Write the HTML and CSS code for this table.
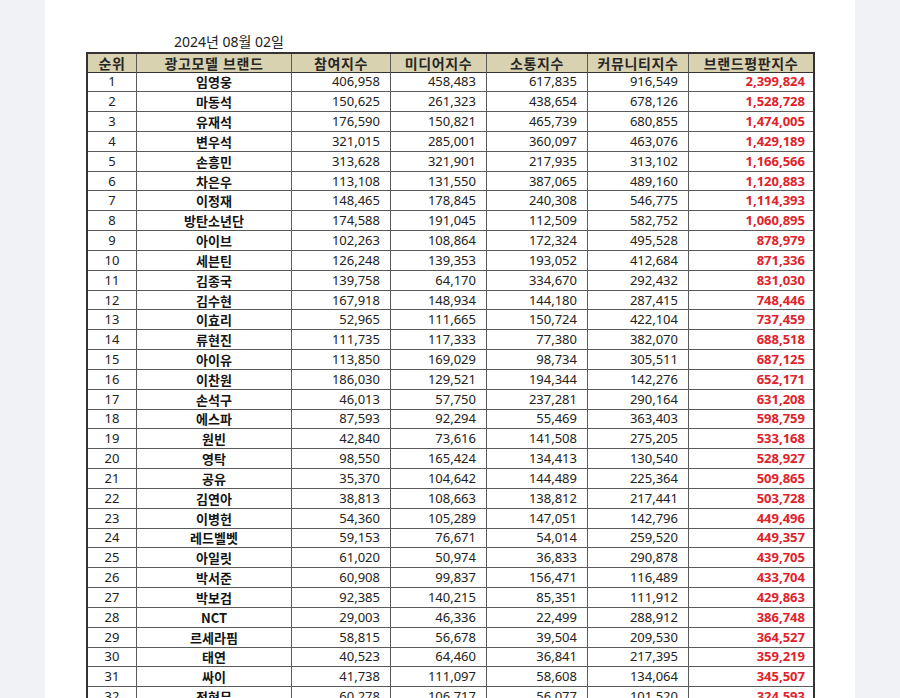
FILE: index.html
```html
<!DOCTYPE html>
<html lang="ko">
<head>
<meta charset="utf-8">
<title>광고모델 브랜드평판</title>
<link rel="stylesheet" href="styles.css">
</head>
<body>
<div class="page">
  <div class="date">2024년 08월 02일</div>
  <table class="rank">
    <colgroup>
      <col class="c-rank"><col class="c-name"><col class="c-a"><col class="c-b"><col class="c-c"><col class="c-d"><col class="c-e">
    </colgroup>
    <thead>
      <tr><th>순위</th><th>광고모델 브랜드</th><th>참여지수</th><th>미디어지수</th><th>소통지수</th><th>커뮤니티지수</th><th class="last">브랜드평판지수</th></tr>
    </thead>
    <tbody>
      <tr><td>1</td><td class="nm">임영웅</td><td class="n">406,958</td><td class="n">458,483</td><td class="n">617,835</td><td class="n">916,549</td><td class="t">2,399,824</td></tr>
      <tr><td>2</td><td class="nm">마동석</td><td class="n">150,625</td><td class="n">261,323</td><td class="n">438,654</td><td class="n">678,126</td><td class="t">1,528,728</td></tr>
      <tr><td>3</td><td class="nm">유재석</td><td class="n">176,590</td><td class="n">150,821</td><td class="n">465,739</td><td class="n">680,855</td><td class="t">1,474,005</td></tr>
      <tr><td>4</td><td class="nm">변우석</td><td class="n">321,015</td><td class="n">285,001</td><td class="n">360,097</td><td class="n">463,076</td><td class="t">1,429,189</td></tr>
      <tr><td>5</td><td class="nm">손흥민</td><td class="n">313,628</td><td class="n">321,901</td><td class="n">217,935</td><td class="n">313,102</td><td class="t">1,166,566</td></tr>
      <tr><td>6</td><td class="nm">차은우</td><td class="n">113,108</td><td class="n">131,550</td><td class="n">387,065</td><td class="n">489,160</td><td class="t">1,120,883</td></tr>
      <tr><td>7</td><td class="nm">이정재</td><td class="n">148,465</td><td class="n">178,845</td><td class="n">240,308</td><td class="n">546,775</td><td class="t">1,114,393</td></tr>
      <tr><td>8</td><td class="nm">방탄소년단</td><td class="n">174,588</td><td class="n">191,045</td><td class="n">112,509</td><td class="n">582,752</td><td class="t">1,060,895</td></tr>
      <tr><td>9</td><td class="nm">아이브</td><td class="n">102,263</td><td class="n">108,864</td><td class="n">172,324</td><td class="n">495,528</td><td class="t">878,979</td></tr>
      <tr><td>10</td><td class="nm">세븐틴</td><td class="n">126,248</td><td class="n">139,353</td><td class="n">193,052</td><td class="n">412,684</td><td class="t">871,336</td></tr>
      <tr><td>11</td><td class="nm">김종국</td><td class="n">139,758</td><td class="n">64,170</td><td class="n">334,670</td><td class="n">292,432</td><td class="t">831,030</td></tr>
      <tr><td>12</td><td class="nm">김수현</td><td class="n">167,918</td><td class="n">148,934</td><td class="n">144,180</td><td class="n">287,415</td><td class="t">748,446</td></tr>
      <tr><td>13</td><td class="nm">이효리</td><td class="n">52,965</td><td class="n">111,665</td><td class="n">150,724</td><td class="n">422,104</td><td class="t">737,459</td></tr>
      <tr><td>14</td><td class="nm">류현진</td><td class="n">111,735</td><td class="n">117,333</td><td class="n">77,380</td><td class="n">382,070</td><td class="t">688,518</td></tr>
      <tr><td>15</td><td class="nm">아이유</td><td class="n">113,850</td><td class="n">169,029</td><td class="n">98,734</td><td class="n">305,511</td><td class="t">687,125</td></tr>
      <tr><td>16</td><td class="nm">이찬원</td><td class="n">186,030</td><td class="n">129,521</td><td class="n">194,344</td><td class="n">142,276</td><td class="t">652,171</td></tr>
      <tr><td>17</td><td class="nm">손석구</td><td class="n">46,013</td><td class="n">57,750</td><td class="n">237,281</td><td class="n">290,164</td><td class="t">631,208</td></tr>
      <tr><td>18</td><td class="nm">에스파</td><td class="n">87,593</td><td class="n">92,294</td><td class="n">55,469</td><td class="n">363,403</td><td class="t">598,759</td></tr>
      <tr><td>19</td><td class="nm">원빈</td><td class="n">42,840</td><td class="n">73,616</td><td class="n">141,508</td><td class="n">275,205</td><td class="t">533,168</td></tr>
      <tr><td>20</td><td class="nm">영탁</td><td class="n">98,550</td><td class="n">165,424</td><td class="n">134,413</td><td class="n">130,540</td><td class="t">528,927</td></tr>
      <tr><td>21</td><td class="nm">공유</td><td class="n">35,370</td><td class="n">104,642</td><td class="n">144,489</td><td class="n">225,364</td><td class="t">509,865</td></tr>
      <tr><td>22</td><td class="nm">김연아</td><td class="n">38,813</td><td class="n">108,663</td><td class="n">138,812</td><td class="n">217,441</td><td class="t">503,728</td></tr>
      <tr><td>23</td><td class="nm">이병헌</td><td class="n">54,360</td><td class="n">105,289</td><td class="n">147,051</td><td class="n">142,796</td><td class="t">449,496</td></tr>
      <tr><td>24</td><td class="nm">레드벨벳</td><td class="n">59,153</td><td class="n">76,671</td><td class="n">54,014</td><td class="n">259,520</td><td class="t">449,357</td></tr>
      <tr><td>25</td><td class="nm">아일릿</td><td class="n">61,020</td><td class="n">50,974</td><td class="n">36,833</td><td class="n">290,878</td><td class="t">439,705</td></tr>
      <tr><td>26</td><td class="nm">박서준</td><td class="n">60,908</td><td class="n">99,837</td><td class="n">156,471</td><td class="n">116,489</td><td class="t">433,704</td></tr>
      <tr><td>27</td><td class="nm">박보검</td><td class="n">92,385</td><td class="n">140,215</td><td class="n">85,351</td><td class="n">111,912</td><td class="t">429,863</td></tr>
      <tr><td>28</td><td class="nm">NCT</td><td class="n">29,003</td><td class="n">46,336</td><td class="n">22,499</td><td class="n">288,912</td><td class="t">386,748</td></tr>
      <tr><td>29</td><td class="nm">르세라핌</td><td class="n">58,815</td><td class="n">56,678</td><td class="n">39,504</td><td class="n">209,530</td><td class="t">364,527</td></tr>
      <tr><td>30</td><td class="nm">태연</td><td class="n">40,523</td><td class="n">64,460</td><td class="n">36,841</td><td class="n">217,395</td><td class="t">359,219</td></tr>
      <tr><td>31</td><td class="nm">싸이</td><td class="n">41,738</td><td class="n">111,097</td><td class="n">58,608</td><td class="n">134,064</td><td class="t">345,507</td></tr>
      <tr><td>32</td><td class="nm">전현무</td><td class="n">60,278</td><td class="n">106,717</td><td class="n">56,077</td><td class="n">101,520</td><td class="t">324,593</td></tr>
    </tbody>
  </table>
</div>
</body>
</html>
```

FILE: styles.css
```css
html, body {
  margin: 0;
  padding: 0;
  height: 100%;
  overflow: hidden;
}

body {
  background: #f1f2f6;
  font-family: "Noto Sans", "Noto Sans CJK KR", sans-serif;
  color: #1e1e1e;
}

.page {
  margin: 0 45px;
  height: 698px;
  background: #ffffff;
  padding: 31.5px 0 0 41px;
  box-sizing: border-box;
  overflow: hidden;
}

.date {
  margin-left: 88px;
  font-size: 14px;
  line-height: 20px;
  height: 20px;
  color: #222;
}

.rank {
  border-collapse: separate;
  border-spacing: 0;
  table-layout: fixed;
  width: 728px;
  border: 2px solid #333;
}

.c-rank { width: 49px; }
.c-name { width: 155px; }
.c-a { width: 99px; }
.c-b { width: 96px; }
.c-c { width: 101px; }
.c-d { width: 101px; }
.c-e { width: 124px; }

.rank th,
.rank td {
  padding: 0;
  border-right: 1px solid #5a5a5a;
  border-bottom: 1px solid #5a5a5a;
  box-sizing: border-box;
  vertical-align: middle;
  white-space: nowrap;
  overflow: hidden;
}

.rank th:last-child,
.rank td:last-child {
  border-right: none;
}

.rank thead tr {
  height: 19px;
}

.rank th {
  background: #d9d2b1;
  font-family: "Noto Sans CJK KR", sans-serif;
  font-weight: 700;
  font-size: 14px;
  line-height: 18px;
  letter-spacing: 0.6px;
  color: #262626;
  text-align: center;
  border-bottom-color: #333;
}

.rank tbody tr {
  height: 19.84px;
}

.rank td {
  font-size: 13px;
  line-height: 17px;
  text-align: center;
  color: #222;
}

.rank td.nm {
  font-family: "Noto Sans CJK KR", sans-serif;
  font-weight: 700;
  color: #151515;
}

.rank td.n {
  text-align: right;
  padding-right: 10px;
}

.rank td.t {
  text-align: right;
  padding-right: 8px;
  font-weight: 700;
  color: #e0232b;
}
```
